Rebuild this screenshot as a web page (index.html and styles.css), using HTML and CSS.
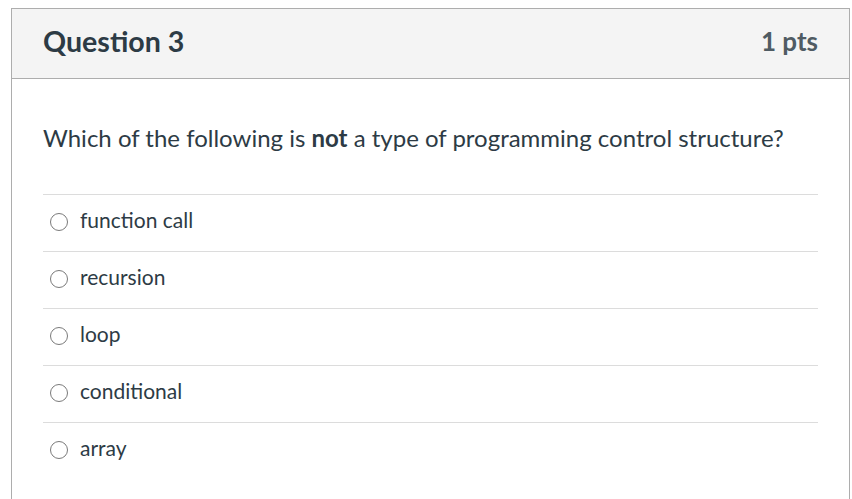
FILE: index.html
```html
<!DOCTYPE html>
<html>
<head>
<meta charset="utf-8">
<link rel="stylesheet" href="styles.css">
</head>
<body>
<div class="quiz">
  <div class="quiz-header">
    <h2 class="quiz-title">Question 3</h2>
    <div class="quiz-points">1 pts</div>
  </div>
  <div class="quiz-body">
    <p class="quiz-question">Which of the following is <strong>not</strong> a type of programming control structure?</p>
    <div class="answers">
      <label class="answer"><span class="radio"></span><span class="answer-text">function call</span></label>
      <label class="answer"><span class="radio"></span><span class="answer-text">recursion</span></label>
      <label class="answer"><span class="radio"></span><span class="answer-text">loop</span></label>
      <label class="answer"><span class="radio"></span><span class="answer-text">conditional</span></label>
      <label class="answer"><span class="radio"></span><span class="answer-text">array</span></label>
    </div>
  </div>
</div>
</body>
</html>
```
FILE: styles.css
```css
html, body {
  margin: 0;
  padding: 0;
  background: #ffffff;
}
body {
  font-family: Lato, "Open Sans", sans-serif;
  color: #2d3b45;
}
.quiz {
  margin: 8px 0 0 11px;
  width: 837px;
  height: 491px;
  border: 1px solid #adadad;
  border-bottom: none;
  overflow: hidden;
}
.quiz-header {
  display: flex;
  align-items: center;
  justify-content: space-between;
  height: 64px;
  padding: 0 31px 5px;
  background: #f4f4f4;
  border-bottom: 1px solid #adadad;
}
.quiz-title {
  margin: 0;
  font-size: 28.6px;
  font-weight: 700;
  color: #2d3b45;
}
.quiz-points {
  font-size: 26px;
  font-weight: 700;
  color: #4f5b63;
}
.quiz-body {
  padding: 0 31px;
}
.quiz-question {
  margin: 0;
  padding: 43px 0 40px;
  font-size: 24px;
  line-height: 32px;
}
.quiz-question strong {
  font-weight: 700;
}
.answers {
  display: flex;
  flex-direction: column;
}
.answer {
  display: flex;
  align-items: center;
  height: 56px;
  border-top: 1px solid #dcdcdc;
  padding-left: 7px;
}
.radio {
  box-sizing: border-box;
  width: 18px;
  height: 18px;
  border: 1.5px solid #7a7a7a;
  border-radius: 50%;
  margin-right: 12px;
  flex: none;
  position: relative;
  top: -1px;
}
.answer-text {
  font-size: 21px;
  position: relative;
  top: -4px;
}
```
